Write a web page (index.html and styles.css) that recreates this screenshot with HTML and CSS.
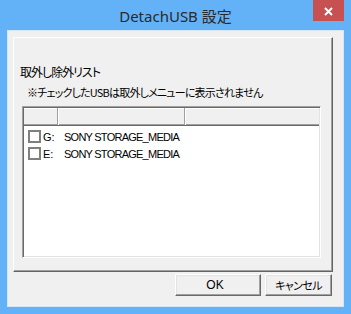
FILE: index.html
```html
<!DOCTYPE html>
<html lang="ja">
<head>
<meta charset="utf-8">
<title>DetachUSB 設定</title>
<link rel="stylesheet" href="styles.css">
</head>
<body>
<div class="window">
  <div class="titlebar">
    <div class="title">DetachUSB <span class="jp">設定</span></div>
    <div class="close">
      <svg width="9" height="9" viewBox="0 0 9 9"><path d="M1 1L8 8M8 1L1 8" stroke="#fff" stroke-width="2" fill="none"/></svg>
    </div>
  </div>
  <div class="client">
    <div class="panel">
      <div class="label">取外し除外リスト</div>
      <div class="note">※チェックしたUSBは取外しメニューに表示されません</div>
      <div class="list">
        <div class="header">
          <div class="hcell c1"></div>
          <div class="hcell c2"></div>
          <div class="hcell c3"></div>
        </div>
        <div class="rows">
          <div class="row"><span class="check"></span><span class="drive">G:</span><span class="name">SONY STORAGE_MEDIA</span></div>
          <div class="row"><span class="check"></span><span class="drive">E:</span><span class="name">SONY STORAGE_MEDIA</span></div>
        </div>
      </div>
    </div>
    <div class="buttons">
      <button class="btn ok">OK</button>
      <button class="btn cancel">キャンセル</button>
    </div>
  </div>
</div>
</body>
</html>
```
FILE: styles.css
```css
* { box-sizing: border-box; }
html, body { margin: 0; padding: 0; }
body { width: 351px; height: 314px; overflow: hidden; background: #63b1f6; }

.window {
  width: 351px;
  height: 314px;
  background: #63b1f6;
  padding: 0 7px 7px 7px;
  display: flex;
  flex-direction: column;
  position: relative;
}

.titlebar {
  height: 30px;
  flex: none;
  display: flex;
  justify-content: center;
}
.title {
  font-family: "Noto Sans", "Noto Sans CJK JP", sans-serif;
  font-size: 15px;
  line-height: 30px;
  padding-top: 1px;
  color: #2a2a2a;
}
.title .jp { font-family: "Noto Sans CJK JP", sans-serif; }

.close {
  position: absolute;
  top: 0;
  left: 313px;
  width: 31px;
  height: 21px;
  background: #c75050;
  display: flex;
  align-items: center;
  justify-content: center;
}
.close svg { display: block; margin-top: 1px; }

.client {
  flex: 1;
  background: #f0f0f0;
  border: 1px solid #d6e6f5;
  display: flex;
  flex-direction: column;
}

.panel {
  margin: 6px 10px 0 5px;
  height: 235px;
  border-top: 1px solid #ffffff;
  border-left: 1px solid #ffffff;
  border-right: 1px solid #646464;
  border-bottom: 1px solid #646464;
  box-shadow: inset -1px -1px 0 #a0a0a0;
  padding: 26px 0 0 6px;
  font-family: "Noto Sans CJK JP", sans-serif;
  font-feature-settings: "palt" 1;
  color: #000;
}
.label {
  font-size: 12px;
  line-height: 16px;
  height: 16px;
  letter-spacing: -1px;
}
.note {
  margin-top: 5px;
  margin-left: 7px;
  font-size: 11px;
  line-height: 15px;
  height: 15px;
  letter-spacing: -0.8px;
}

.list {
  margin-top: 6px;
  margin-left: 2px;
  width: 299px;
  height: 152px;
  background: #ffffff;
  border-top: 1px solid #a0a0a0;
  border-left: 1px solid #a0a0a0;
  border-right: 1px solid #ffffff;
  border-bottom: 1px solid #ffffff;
  box-shadow: inset 1px 1px 0 #696969, inset -1px -1px 0 #e3e3e3;
  padding: 1px;
  overflow: hidden;
}

.header {
  display: flex;
  height: 18px;
  background: #f0f0f0;
  border-bottom: 1px solid #696969;
  box-shadow: inset 0 -1px 0 #a0a0a0, inset 0 1px 0 #ffffff;
}
.hcell {
  height: 100%;
  border-right: 1px solid #ffffff;
  box-shadow: inset -1px 0 0 #a0a0a0;
}
.c1 { width: 35px; }
.c2 { width: 127px; }
.c3 { flex: 1; border-right: none; box-shadow: none; }

.rows { padding-top: 2px; }
.row {
  height: 17px;
  display: flex;
  align-items: center;
  font-family: "Liberation Sans", Arial, sans-serif;
  font-size: 11px;
  letter-spacing: -0.75px;
  color: #000;
}
.check {
  width: 13px;
  height: 13px;
  margin-left: 4px;
  border: 2px solid #808080;
  background: #fff;
  flex: none;
}
.drive { margin-left: 2px; width: 21px; letter-spacing: 0; }

.buttons {
  display: flex;
  justify-content: flex-end;
  gap: 4px;
  margin-top: 2px;
  padding-right: 11px;
}
.btn {
  height: 22px;
  margin: 0;
  padding: 0;
  background: #f0f0f0;
  border-top: 1px solid #ffffff;
  border-left: 1px solid #ffffff;
  border-right: 1px solid #696969;
  border-bottom: 1px solid #696969;
  box-shadow: inset -1px -1px 0 #a0a0a0, inset 1px 1px 0 #e3e3e3;
  font-family: "Noto Sans CJK JP", sans-serif;
  font-feature-settings: "palt" 1;
  font-size: 12px;
  color: #000;
}
.ok { width: 86px; padding-right: 6px; font-family: "Liberation Sans", Arial, sans-serif; font-size: 12px; }
.cancel { width: 67px; font-size: 11px; letter-spacing: -0.6px; }
```
